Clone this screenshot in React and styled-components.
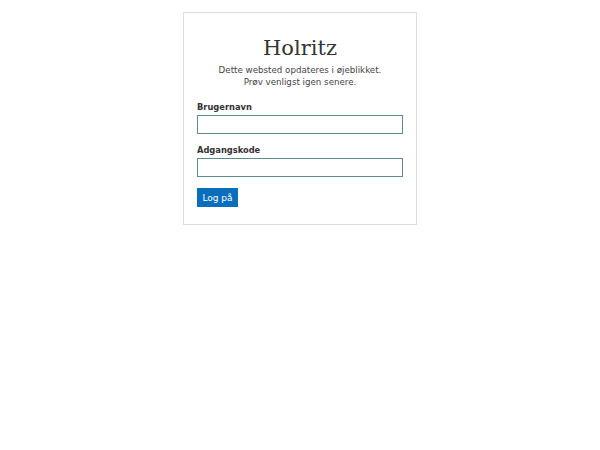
import React from "react";
import styled, { createGlobalStyle } from "styled-components";

const Global = createGlobalStyle`
  body {
    margin: 0;
    background: #fff;
    font-family: "DejaVu Sans", sans-serif;
    color: #333;
  }
`;

const Card = styled.div`
  width: 206px;
  margin: 12px 0 0 183px;
  padding: 22px 13px 17px 13px;
  border: 1px solid #dcdcdc;
`;

const Title = styled.h1`
  margin: 0;
  text-align: center;
  font-family: "DejaVu Serif", serif;
  font-weight: normal;
  font-size: 21px;
  line-height: 26px;
  color: #333;
`;

const Message = styled.p`
  margin: 3px 0 0;
  text-align: center;
  font-size: 8.7px;
  line-height: 12px;
  color: #444;
`;

const Field = styled.div`
  margin-top: ${(p) => p.top}px;
`;

const Label = styled.label`
  display: block;
  font-weight: bold;
  font-size: 8.3px;
  line-height: 12px;
  color: #333;
  margin-bottom: 2px;
`;

const Input = styled.input`
  display: block;
  box-sizing: border-box;
  width: 206px;
  height: 19px;
  margin: 0;
  border: 1px solid #5c8a92;
  border-radius: 0;
  background: #fff;
  padding: 0 4px;
  outline: none;
`;

const Button = styled.button`
  display: block;
  margin-top: 11px;
  width: 41px;
  height: 19px;
  padding: 0;
  border: none;
  background: #0a6ebd;
  color: #fff;
  font-family: "DejaVu Sans", sans-serif;
  font-size: 9px;
  border-radius: 0;
`;

export default function App() {
  return (
    <>
      <Global />
      <Card>
        <Title>Holritz</Title>
        <Message>
          Dette websted opdateres i øjeblikket.
          <br />
          Prøv venligst igen senere.
        </Message>
        <Field top={13}>
          <Label>Brugernavn</Label>
          <Input type="text" />
        </Field>
        <Field top={10}>
          <Label>Adgangskode</Label>
          <Input type="password" />
        </Field>
        <Button>Log på</Button>
      </Card>
    </>
  );
}
